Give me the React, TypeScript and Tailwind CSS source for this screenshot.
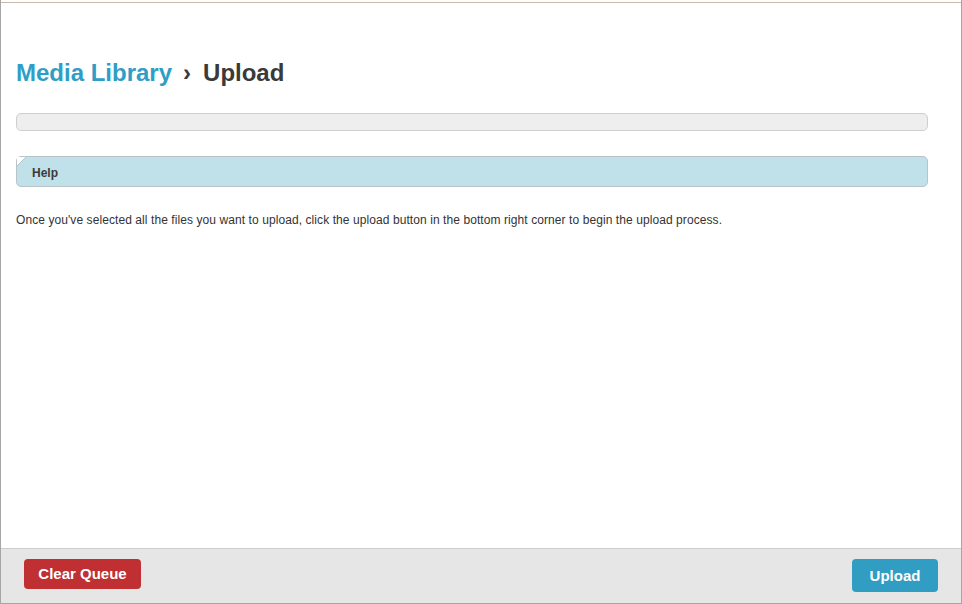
import React from "react";

export default function App() {
  return (
    <div
      className="w-[962px] h-[604px] flex flex-col border-l border-r border-b border-[#a6a6a6] bg-white overflow-hidden"
      style={{ fontFamily: '"Liberation Sans", Arial, sans-serif' }}
    >
      <div className="mt-[2px] h-px bg-[#c9b9aa] shrink-0" />
      <div className="flex-1 pl-[15px] pr-[33px]">
        <h1 className="mt-[55px] h-[30px] text-[24px] leading-[30px] font-bold text-[#3a3a3a] flex items-center">
          <span className="text-[#2f9ec6]">Media Library</span>
          <span className="ml-[11px] mr-[12px] text-[24px]">›</span>
          <span>Upload</span>
        </h1>
        <div className="mt-[25px] h-[18px] rounded-[5px] border border-[#cfcfcf] bg-[#eeeeee]" />
        <div className="relative mt-[25px] h-[31px] rounded-[5px] border border-[#b9c4c8] bg-[#c0e0ea] flex items-center pl-[15px] pt-[2px]">
          <svg className="absolute left-0 top-0" width="9" height="9" viewBox="0 0 9 9">
            <path d="M0 0 H9 L0 9 Z" fill="#ffffff" />
            <path d="M9 0 L0 9" stroke="#b9c4c8" strokeWidth="1" />
          </svg>
          <span className="text-[12px] font-bold text-[#3a3a3a]">Help</span>
        </div>
        <p className="mt-[26px] text-[12px] leading-[15px] tracking-[0.08px] text-[#333333]">
          Once you've selected all the files you want to upload, click the upload button in the bottom right corner to begin the upload process.
        </p>
      </div>
      <div className="h-[55px] shrink-0 border-t border-[#cccccc] bg-[#e6e6e6] flex items-start justify-between pl-[23px] pr-[23px] pt-[10px]">
        <button className="w-[117px] h-[30px] rounded-[4px] bg-[#c02f31] text-white text-[15px] font-bold">
          Clear Queue
        </button>
        <button className="w-[86px] h-[33px] rounded-[4px] bg-[#319dc2] text-white text-[15px] font-bold pt-[2px]">
          Upload
        </button>
      </div>
    </div>
  );
}
